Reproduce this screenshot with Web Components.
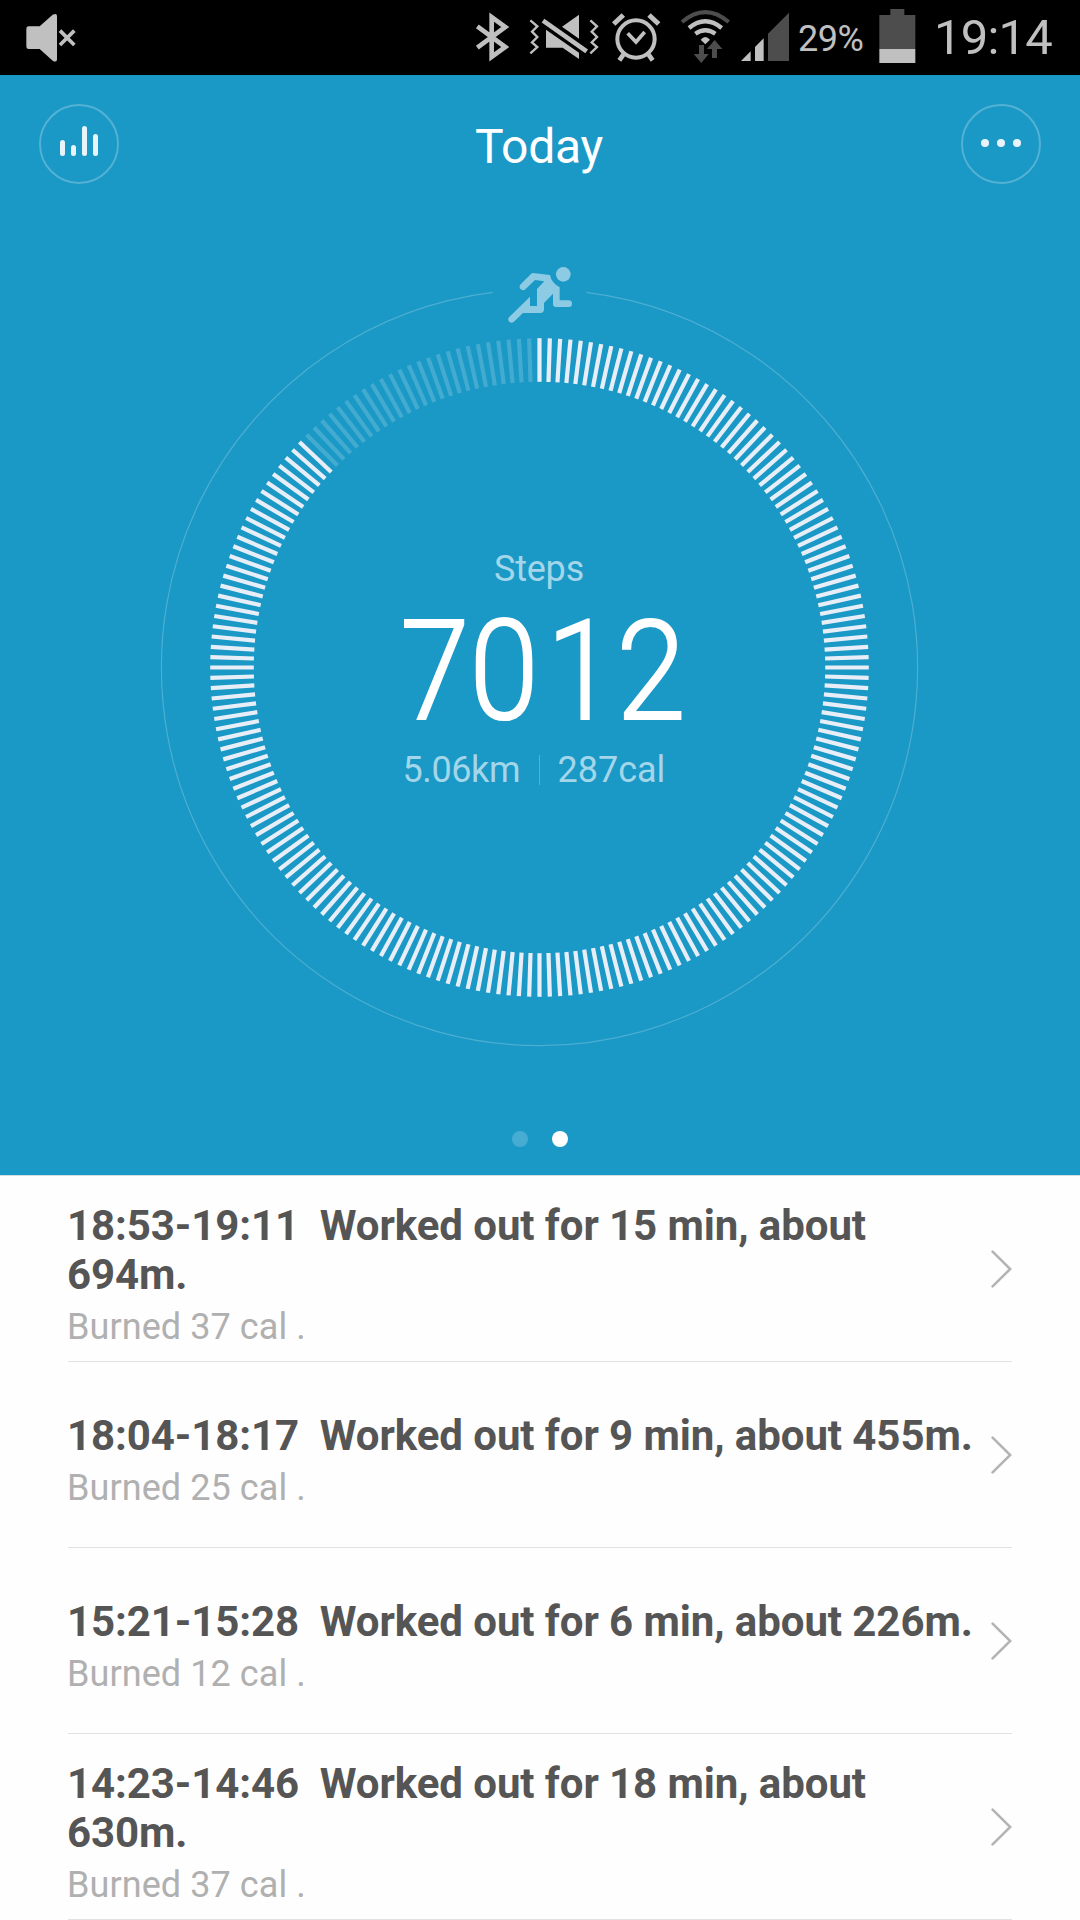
<!DOCTYPE html>
<html lang="en">
<head>
<meta charset="UTF-8">
<meta name="viewport" content="width=device-width, initial-scale=1.0">
<title>Today</title>
<style>
    html, body {
        margin: 0;
        padding: 0;
    }

    body {
        width: 1080px;
        height: 1920px;
        overflow: hidden;
        background: #fefefe;
        font-family: Roboto, "Noto Sans", sans-serif;
    }
</style>
</head>
<body>
<fitness-app></fitness-app>

<script>
class StatusBar extends HTMLElement {
    connectedCallback() {
        this.attachShadow({ mode: 'open' });
        this.shadowRoot.innerHTML = `
            <style>
                :host {
                    display: flex;
                    justify-content: space-between;
                    height: 75px;
                    background: #000;
                    color: #c0c0c0;
                }

                .side {
                    display: flex;
                    height: 75px;
                }

                svg {
                    display: block;
                    flex: none;
                    height: 75px;
                    fill: #c0c0c0;
                }

                .line {
                    fill: none;
                    stroke: #c0c0c0;
                }

                .dim { fill: #4d4d4d; }
                .dim-line { fill: none; stroke: #4d4d4d; }

                .percent {
                    width: 79px;
                    padding-left: 2px;
                    margin-right: 1px;
                    font-size: 36px;
                    line-height: 78px;
                    letter-spacing: -0.5px;
                    white-space: nowrap;
                }

                .clock {
                    width: 146px;
                    padding-left: 1px;
                    font-size: 49px;
                    line-height: 75px;
                    letter-spacing: -0.8px;
                    white-space: nowrap;
                }
            </style>

            <div class="side">
                <svg width="80" viewBox="0 0 240 225">
                    <path d="M86 79H119L158 44Q171 38 171 48V178Q171 189 158 182L119 147H86Q79 147 79 138V88Q79 79 86 79Z"/>
                    <path class="line" stroke-width="11" d="M180 92L223 135M223 92L180 135"/>
                </svg>
            </div>

            <div class="side">
                <!-- bluetooth -->
                <svg width="50" viewBox="30 0 150 225">
                    <path class="line" stroke-width="14" stroke-miterlimit="10" d="M52 79L136 141L95 171V51L136 81L52 143"/>
                </svg>
                <!-- muted with vibration -->
                <svg width="85" viewBox="180 0 255 225">
                    <path class="line" stroke-width="7" d="M211 61L232 79L216 95L232 111L216 127L232 141L211 160M391 61L411 79L395 95L411 111L395 127L411 141L391 160"/>
                    <path d="M357 44V116L306 80ZM258 89L357 158V177L308 143H258Z"/>
                    <path class="line" stroke-width="14" d="M249 62L380 154"/>
                </svg>
                <!-- alarm -->
                <svg width="65" viewBox="435 0 195 225">
                    <circle class="line" stroke-width="12" cx="528" cy="117" r="56"/>
                    <path class="line" stroke-width="11" d="M503 100L528 126L554 96"/>
                    <path class="line" stroke-width="15" d="M461 72L490 45M567 45L596 72"/>
                    <path class="line" stroke-width="14" d="M490 164L478 181M566 164L578 181"/>
                </svg>
                <!-- wifi -->
                <svg width="65" viewBox="630 0 195 225">
                    <path class="dim-line" stroke-width="12" d="M666 66Q736 7 806 66"/>
                    <path class="line" stroke-width="13" d="M687 84Q736 44 785 84M706 101Q736 80 766 101"/>
                    <path d="M722 119Q736 103 750 119L736 133Z"/>
                    <path class="dim" d="M717 135H732V162H746L724 189L701 162H717ZM756 174H771V147H787L764 120L741 147H756Z"/>
                </svg>
                <!-- signal -->
                <svg width="61" viewBox="825 0 183 225">
                    <path d="M843 183L872 154V183ZM885 141L911 115V183H885Z"/>
                    <path class="dim" d="M924 101L987 38V183H924Z"/>
                </svg>
                <span class="percent">29%</span>
                <!-- battery -->
                <svg width="55" viewBox="353 0 165 225">
                    <path class="dim" d="M357 45H390V27H432V45H465V147H357Z"/>
                    <path d="M357 147H465V189H357Z"/>
                </svg>
                <span class="clock">19:14</span>
            </div>
        `;
    }
}

class RoundButton extends HTMLElement {
    connectedCallback() {
        this.attachShadow({ mode: 'open' });
        this.shadowRoot.innerHTML = `
            <style>
                :host {
                    display: block;
                    width: 80px;
                    height: 80px;
                    box-sizing: border-box;
                    border: 2px solid rgba(255, 255, 255, 0.25);
                    border-radius: 50%;
                }

                ::slotted(svg) {
                    display: block;
                    width: 80px;
                    height: 80px;
                    margin: -2px;
                }
            </style>
            <slot></slot>
        `;
    }
}

class TopBar extends HTMLElement {
    connectedCallback() {
        this.attachShadow({ mode: 'open' });
        this.shadowRoot.innerHTML = `
            <style>
                :host {
                    display: flex;
                    justify-content: space-between;
                    align-items: center;
                    padding: 29px 39px 0;
                }

                h1 {
                    margin: 0;
                    padding: 6px 2px 0 0;
                    font-size: 48px;
                    font-weight: 400;
                    line-height: 56px;
                    letter-spacing: -0.2px;
                    color: #fff;
                }
            </style>

            <round-button>
                <svg viewBox="0 0 80 80" fill="#e8f4f9">
                    <rect x="21" y="36" width="5" height="16" rx="2.5"/>
                    <rect x="32" y="41" width="5" height="11" rx="2.5"/>
                    <rect x="43" y="22" width="5" height="30" rx="2.5"/>
                    <rect x="54" y="30" width="5" height="22" rx="2.5"/>
                </svg>
            </round-button>
            <h1><slot></slot></h1>
            <round-button>
                <svg viewBox="0 0 80 80" fill="#e8f4f9">
                    <circle cx="24" cy="39" r="4"/>
                    <circle cx="40" cy="39" r="4"/>
                    <circle cx="56" cy="39" r="4"/>
                </svg>
            </round-button>
        `;
    }
}

class StepRing extends HTMLElement {
    connectedCallback() {
        this.total = 200;
        this.filled = Math.floor(this.total * this.getAttribute('steps') / this.getAttribute('goal'));
        this.attachShadow({ mode: 'open' });
        this.render();
    }

    renderTicks() {
        let ticks = '';
        for (let i = 0; i < this.total; i++) {
            const cls = i < this.filled ? 'on' : 'off';
            ticks += `<line class="${cls}" y1="-329.3" y2="-285.7" transform="rotate(${(i * 360 / this.total).toFixed(1)})"/>`;
        }
        return ticks;
    }

    // the narrow "1" gets its own side margins
    renderCount() {
        return this.getAttribute('steps').replace(/1/g, '<span class="one">1</span>');
    }

    render() {
        this.shadowRoot.innerHTML = `
            <style>
                :host {
                    display: grid;
                    width: 1080px;
                    height: 820px;
                    margin-top: 56px;
                }

                svg, .info {
                    grid-area: 1 / 1;
                }

                .track {
                    fill: none;
                    stroke: rgba(255, 255, 255, 0.22);
                    stroke-width: 1.2;
                }

                line { stroke-width: 4.2; }
                .on { stroke: #e8eef7; }
                .off { stroke: rgba(255, 255, 255, 0.18); }
                .runner { fill: #8ccbe3; }

                .info {
                    display: flex;
                    flex-direction: column;
                    align-items: center;
                    padding-top: 308px;
                    color: #a3d6e9;
                    font-size: 36px;
                    line-height: 42px;
                }

                .label {
                    padding-right: 2px;
                    letter-spacing: -0.2px;
                }

                .count {
                    height: 152px;
                    margin-top: 5px;
                    padding-left: 6px;
                    color: #fff;
                    font-size: 140px;
                    font-weight: 300;
                    line-height: 152px;
                    white-space: nowrap;
                    transform: scaleX(0.89);
                    -webkit-text-stroke: 2.2px #fff;
                }

                .one {
                    margin: 0 1px 0 9px;
                }

                .details {
                    display: grid;
                    grid-template-columns: 134px 1px 136px;
                    align-items: center;
                    margin-top: 2px;
                }

                .details i {
                    height: 30px;
                    background: rgba(255, 255, 255, 0.25);
                }

                .details span:first-child {
                    margin-left: -2px;
                    letter-spacing: -0.4px;
                }

                .details span:last-child {
                    padding-left: 18px;
                }
            </style>

            <svg width="1080" height="820" viewBox="0 240 1080 820">
                <g transform="translate(539.5 667.5)">
                    <path class="track" d="M46.7 -375.2A378.1 378.1 0 1 1 -46.7 -375.2"/>
                    ${this.renderTicks()}
                </g>
                <g class="runner" transform="translate(460 240) scale(0.33333)">
                    <circle cx="310" cy="103" r="22"/>
                    <path d="M219 99L270 105Q274 128 299 142V181H326A10 10 0 0 1 326 201H288Q279 201 279 192V161L252 189V208Q252 219 241 219H189L161 246A10 10 0 0 1 147 232L210 170V198H231V147L253 124L225 120L197 147A10 10 0 0 1 182 133L213 102Q216 99 219 99Z"/>
                </g>
            </svg>

            <div class="info">
                <div class="label">Steps</div>
                <div class="count">${this.renderCount()}</div>
                <div class="details">
                    <span>${this.getAttribute('distance')}</span>
                    <i></i>
                    <span>${this.getAttribute('calories')}</span>
                </div>
            </div>
        `;
    }
}

class PageDots extends HTMLElement {
    connectedCallback() {
        this.attachShadow({ mode: 'open' });
        this.shadowRoot.innerHTML = `
            <style>
                :host {
                    display: flex;
                    justify-content: center;
                    gap: 23.5px;
                    margin-top: 71px;
                    padding-right: 0.5px;
                }

                span {
                    width: 16px;
                    height: 16px;
                    border-radius: 50%;
                    background: rgba(255, 255, 255, 0.2);
                }

                .active { background: #fff; }
            </style>
            <span></span><span class="active"></span>
        `;
    }
}

class WorkoutItem extends HTMLElement {
    connectedCallback() {
        this.attachShadow({ mode: 'open' });
        this.shadowRoot.innerHTML = `
            <style>
                :host {
                    display: flex;
                    align-items: center;
                    justify-content: space-between;
                    height: 186px;
                    box-sizing: border-box;
                    margin: 0 68px;
                    border-bottom: 1px solid #e2e2e2;
                }

                .text {
                    width: 916px;
                    margin-left: -1px;
                    padding-top: 11px;
                }

                .title {
                    font-size: 42px;
                    font-weight: 700;
                    line-height: 49px;
                    letter-spacing: -0.08px;
                    color: #555;
                    white-space: pre-wrap;
                }

                .burned {
                    margin-top: 7px;
                    font-size: 36px;
                    line-height: 42px;
                    letter-spacing: 0.08px;
                    color: #b0b0b0;
                }

                svg {
                    flex: none;
                    fill: none;
                    stroke: #b4b4b4;
                    stroke-width: 2.6;
                    stroke-linecap: round;
                }
            </style>

            <div class="text">
                <div class="title">${this.getAttribute('time')}  ${this.getAttribute('summary')}</div>
                <div class="burned"><slot></slot></div>
            </div>
            <svg width="21" height="38" viewBox="0 0 21 38"><path d="M1.6 1.6L19.2 19L1.6 36.4"/></svg>
        `;
    }
}

class FitnessApp extends HTMLElement {
    connectedCallback() {
        this.attachShadow({ mode: 'open' });
        this.shadowRoot.innerHTML = `
            <style>
                :host {
                    display: block;
                    width: 1080px;
                }

                .hero {
                    height: 1101px;
                    background: #1a98c6;
                }

                .list {
                    margin-top: -1px;
                    border-top: 1px solid #d5dde0;
                }
            </style>

            <status-bar></status-bar>
            <section class="hero">
                <top-bar>Today</top-bar>
                <step-ring steps="7012" goal="8000" distance="5.06km" calories="287cal"></step-ring>
                <page-dots></page-dots>
            </section>
            <section class="list">
                <workout-item time="18:53-19:11" summary="Worked out for 15 min, about 694m.">Burned 37 cal .</workout-item>
                <workout-item time="18:04-18:17" summary="Worked out for 9 min, about 455m.">Burned 25 cal .</workout-item>
                <workout-item time="15:21-15:28" summary="Worked out for 6 min, about 226m.">Burned 12 cal .</workout-item>
                <workout-item time="14:23-14:46" summary="Worked out for 18 min, about 630m.">Burned 37 cal .</workout-item>
            </section>
        `;
    }
}

customElements.define('status-bar', StatusBar);
customElements.define('round-button', RoundButton);
customElements.define('top-bar', TopBar);
customElements.define('step-ring', StepRing);
customElements.define('page-dots', PageDots);
customElements.define('workout-item', WorkoutItem);
customElements.define('fitness-app', FitnessApp);
</script>
</body>
</html>
